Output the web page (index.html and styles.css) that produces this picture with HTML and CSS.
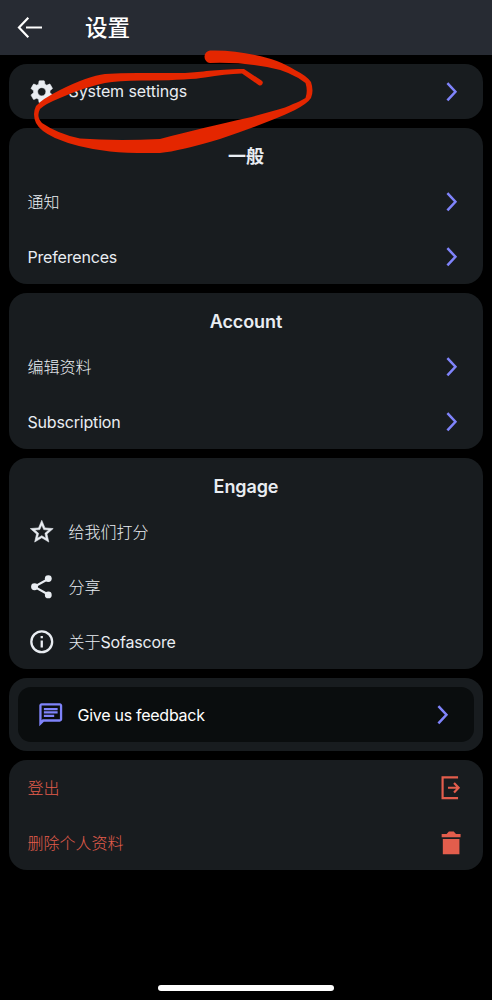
FILE: index.html
```html
<!DOCTYPE html>
<html lang="zh-CN">
<head>
<meta charset="utf-8">
<title>设置</title>
<link rel="stylesheet" href="styles.css">
</head>
<body>
<svg width="0" height="0" class="defs">
  <symbol id="chevron" viewBox="0 0 24 24"><path d="M8.200 4.500l7 7.500-7 7.500" fill="none" stroke="currentColor" stroke-width="2.200"/></symbol>
</svg>
<div class="screen">
  <header class="bar">
    <svg class="back" viewBox="0 0 28 28"><path d="M12.300 3.800L3 13.500 12.300 23.200M10 13.500H26" fill="none" stroke="currentColor" stroke-width="2.200"/></svg>
    <h1>设置</h1>
  </header>
  <main class="cards">
    <section class="card">
      <div class="row">
        <svg class="icon" viewBox="0 0 24 24"><path fill="currentColor" stroke="currentColor" stroke-width=".5" d="M19.140 12.940c.04-.3.060-.61.060-.94 0-.32-.02-.64-.07-.94l2.030-1.580c.18-.14.230-.41.120-.61l-1.920-3.320c-.12-.22-.37-.29-.59-.22l-2.390.96c-.5-.38-1.030-.7-1.620-.94l-.36-2.540c-.04-.24-.24-.41-.48-.41h-3.840c-.24 0-.43.170-.47.410l-.36 2.540c-.59.240-1.130.570-1.620.94l-2.390-.96c-.22-.08-.47 0-.59.220L2.740 8.870c-.12.210-.08.470.12.610l2.030 1.580c-.05.3-.09.630-.09.94s.02.640.070.94l-2.030 1.580c-.18.140-.23.410-.12.610l1.920 3.320c.12.220.37.290.59.220l2.390-.96c.5.380 1.030.7 1.620.94l.36 2.540c.05.240.24.410.48.410h3.840c.24 0 .44-.17.470-.41l.36-2.540c.59-.24 1.130-.56 1.620-.94l2.390.96c.22.080.47 0 .59-.22l1.920-3.320c.12-.22.070-.47-.12-.61zM12 15.600a3.600 3.600 0 1 1 0-7.200 3.600 3.600 0 0 1 0 7.200z"/></svg>
        <span class="label sys">System settings</span>
        <svg class="icon go"><use href="#chevron"/></svg>
      </div>
    </section>
    <section class="card">
      <h2>一般</h2>
      <div class="row"><span class="label zh">通知</span><svg class="icon go"><use href="#chevron"/></svg></div>
      <div class="row"><span class="label">Preferences</span><svg class="icon go"><use href="#chevron"/></svg></div>
    </section>
    <section class="card">
      <h2>Account</h2>
      <div class="row"><span class="label zh">编辑资料</span><svg class="icon go"><use href="#chevron"/></svg></div>
      <div class="row"><span class="label">Subscription</span><svg class="icon go"><use href="#chevron"/></svg></div>
    </section>
    <section class="card">
      <h2>Engage</h2>
      <div class="row">
        <svg class="icon" viewBox="0 0 24 24"><path fill="currentColor" stroke="currentColor" stroke-width=".5" d="M22 9.240l-7.190-.62L12 2 9.190 8.630 2 9.240l5.460 4.730L5.820 21 12 17.270 18.180 21l-1.630-7.030L22 9.240zM12 15.400l-3.760 2.270 1-4.280-3.320-2.880 4.380-.38L12 6.100l1.710 4.040 4.380.38-3.320 2.880 1 4.280L12 15.400z"/></svg>
        <span class="label zh">给我们打分</span>
      </div>
      <div class="row">
        <svg class="icon" viewBox="0 0 24 24"><path d="M18 5L5.500 12 18 19" fill="none" stroke="currentColor" stroke-width="1.800"/><g fill="currentColor"><circle cx="17.700" cy="4.900" r="3"/><circle cx="5.700" cy="12" r="3"/><circle cx="17.700" cy="19.100" r="3"/></g></svg>
        <span class="label zh">分享</span>
      </div>
      <div class="row">
        <svg class="icon" viewBox="0 0 24 24"><circle cx="12" cy="12" r="9.100" fill="none" stroke="currentColor" stroke-width="2"/><path d="M11 11h2v6h-2zM11 7h2v2h-2z" fill="currentColor"/></svg>
        <span class="label zh">关于<span class="latin">Sofascore</span></span>
      </div>
    </section>
    <section class="card framed">
      <div class="row feedback">
        <svg class="icon accent" viewBox="0 0 24 24"><path fill="currentColor" d="M4 2h16c1.100 0 2 .9 2 2v12c0 1.100-.9 2-2 2H6l-4 4V4c0-1.100.9-2 2-2zm0 14.800L4.900 16H20V4H4zM6 12h9v2H6zM6 9h12v2H6zM6 6h12v2H6z" fill-rule="evenodd"/></svg>
        <span class="label give">Give us feedback</span>
        <svg class="icon go"><use href="#chevron"/></svg>
      </div>
    </section>
    <section class="card danger">
      <div class="row">
        <span class="label zh">登出</span>
        <svg class="icon" viewBox="0 0 24 24"><path d="M17.500 2.900H4v18.200H17.500M8.700 12h9M14 7.800l4 4.200-4 4.200" fill="none" stroke="currentColor" stroke-width="1.900"/></svg>
      </div>
      <div class="row">
        <span class="label zh">删除个人资料</span>
        <svg class="icon" viewBox="0 0 24 24"><path fill="currentColor" d="M3.200 7.200V4.400h4.300l2-2.200h4.200l2 2.200h4v2.800zM4.200 8.700h14.500V22H4.200z"/></svg>
      </div>
    </section>
  </main>
  <footer class="home"></footer>
  <svg class="scribble" viewBox="0 0 492 170"><path d="M210 50.500C225 50 241 52 255 55C271 58 284 63 295 70Q307 76 311 82Q314 91 311 98Q308 103 295 110C270 122 245 130 220 139Q180 151 160 153Q130 153.500 110 151.500Q78 148 55 138Q40 131 36 123Q32 114 36 106Q42 99 60 90Q88 76 105 74Q125 72.500 150 73H185C203 72 213 69.500 244 69L261.500 80.500A2.600 2.600 0 0 1 258.500 85L242 73.500Q225 74 205 77.500Q190 80 150 80.500Q120 80 105 83Q85 87 60 98Q45 104 40 109Q36 117 42 123Q58 134 80 138.500Q115 141 160 139C190 131 220 124 247 118Q270 112 285 107.500Q303 100 305.500 98Q308 91 305.500 83Q290 71 267 67Q240 62 210 63A6.300 6.300 0 0 1 210 50.500Z"/></svg>
</div>
</body>
</html>
```
FILE: styles.css
```css
* { box-sizing: border-box; }
body {
  margin: 0;
  background: #000;
  color: #e9edf2;
  font-family: Inter, "Noto Sans CJK SC", sans-serif;
  font-size: 16px;
}
.defs { display: none; }
.screen {
  position: relative;
  display: flex;
  flex-direction: column;
  height: 1000px;
  overflow: hidden;
}
.bar {
  display: flex;
  align-items: center;
  gap: 41px;
  height: 55px;
  padding-left: 16px;
  background: #272b33;
  color: #fff;
}
.back { width: 28px; height: 28px; }
h1 { margin: 0; font-size: 22.500px; line-height: 30px; font-weight: 500; }
.cards {
  flex: 1;
  display: flex;
  flex-direction: column;
  gap: 9px;
  padding: 9px 9px 0;
}
.card { background: #181c1f; border-radius: 18px; }
h2 {
  margin: 0;
  height: 46px;
  padding-top: 15px;
  text-align: center;
  font-size: 18px;
  line-height: 28px;
  font-weight: 600;
  letter-spacing: -0.100px;
}
.row {
  display: flex;
  align-items: center;
  gap: 13.500px;
  height: 55px;
  padding: 0 18px 0 18.500px;
}
.label { flex: 1; line-height: 24px; white-space: nowrap; letter-spacing: -0.180px; }
.zh { letter-spacing: 0; font-weight: 300; }
.latin { font-weight: 400; letter-spacing: -0.180px; }
.give { letter-spacing: -0.270px; }
.sys { letter-spacing: -0.100px; padding-bottom: 1px; }
.icon { flex: none; width: 27.500px; height: 27.500px; }
.go, .accent { color: #7f83fa; }
.framed { padding: 9px; }
.feedback { background: #0a0d0e; border-radius: 13px; color: #fff; }
.danger { color: #e35d4c; }
.home {
  align-self: center;
  width: 176px;
  height: 6px;
  margin-bottom: 9px;
  border-radius: 3px;
  background: #fff;
}
.scribble {
  position: absolute;
  top: 0;
  left: 0;
  width: 492px;
  height: 170px;
  fill: #e42600;
}
```
